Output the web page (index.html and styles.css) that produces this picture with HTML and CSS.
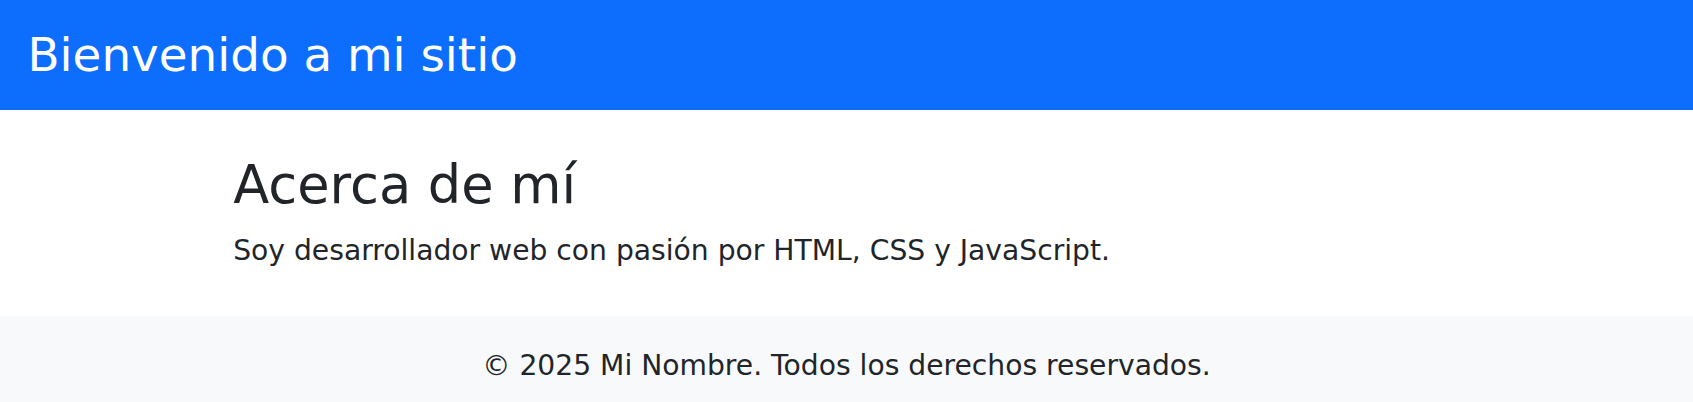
FILE: index.html
```html
<!DOCTYPE html>
<html lang="es">
<head>
<meta charset="utf-8">
<title>Mi sitio</title>
<link rel="stylesheet" href="styles.css">
</head>
<body>
<header class="site-header">
  <h1 class="site-title">Bienvenido a mi sitio</h1>
</header>
<main class="container">
  <section class="about">
    <h2 class="about-title">Acerca de mí</h2>
    <p class="about-text">Soy desarrollador web con pasión por HTML, CSS y JavaScript.</p>
  </section>
</main>
<footer class="site-footer">
  <p class="footer-text">© 2025 Mi Nombre. Todos los derechos reservados.</p>
</footer>
</body>
</html>
```

FILE: styles.css
```css
* { box-sizing: border-box; }
html, body { margin: 0; padding: 0; }
body {
  font-family: "DejaVu Sans", sans-serif;
  font-size: 28.2px;
  line-height: 1.5;
  color: #212529;
  background: #fff;
}
.site-header {
  background: #0d6efd;
  color: #fff;
  padding: 26.9px 27.5px;
}
.site-title {
  margin: 0;
  font-size: 46.8px;
  font-weight: 400;
  line-height: 1.2;
}
.container {
  max-width: 1269px;
  margin: 43px auto 43.5px;
  padding: 0 21.2px;
}
.about-title {
  margin: 0 0 14.1px;
  font-size: 52.6px;
  font-weight: 400;
  line-height: 1.2;
}
.about-text {
  margin: 0 0 28.2px;
}
.site-footer {
  background: #f8f9fa;
  text-align: center;
  padding: 28.6px 28.2px 28.2px;
}
.footer-text {
  margin: 0;
}
```
